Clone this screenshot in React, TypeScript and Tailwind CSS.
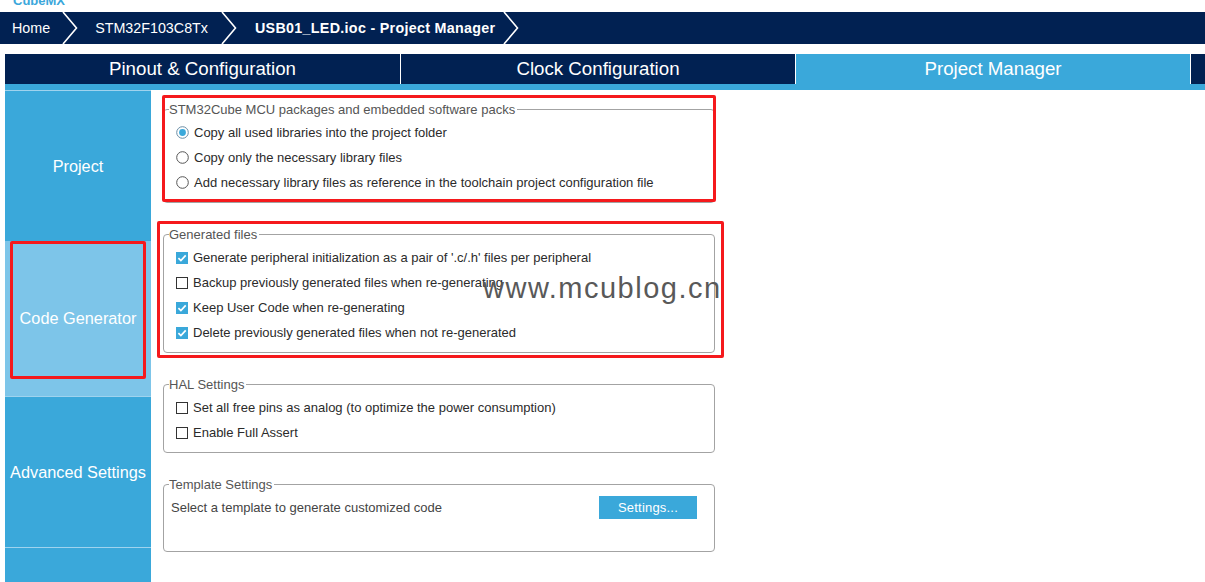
import React from "react";

const FONT = { fontFamily: '"Liberation Sans", Arial, sans-serif' };

function Chevron() {
  return (
    <svg width="16" height="32" viewBox="0 0 16 32" className="shrink-0">
      <polyline points="1,0 14.5,16 1,32" fill="none" stroke="#ffffff" strokeWidth="1.6" />
    </svg>
  );
}

function Radio({ checked }: { checked?: boolean }) {
  return (
    <svg width="13" height="13" viewBox="0 0 13 13" className="shrink-0">
      <circle cx="6.5" cy="6.5" r="5.8" fill="#ffffff" stroke={checked ? "#6a8ea6" : "#555555"} strokeWidth="1" />
      {checked && <circle cx="6.5" cy="6.5" r="3.4" fill="#3aa8da" />}
    </svg>
  );
}

function Check({ checked }: { checked?: boolean }) {
  return (
    <svg width="12" height="12" viewBox="0 0 12 12" className="shrink-0">
      {checked ? (
        <>
          <rect x="0" y="0" width="12" height="12" fill="#3aa8da" />
          <path d="M2.4 6.1 L4.9 8.6 L9.7 3.4" fill="none" stroke="#ffffff" strokeWidth="1.7" />
        </>
      ) : (
        <rect x="0.5" y="0.5" width="11" height="11" fill="#ffffff" stroke="#333333" strokeWidth="1" />
      )}
    </svg>
  );
}

function Row({ icon, label }: { icon: React.ReactNode; label: string }) {
  return (
    <div className="flex h-[25px] items-center gap-[5px]">
      {icon}
      <span className="text-[13px] leading-[15px] text-[#2b2b2b] whitespace-nowrap">{label}</span>
    </div>
  );
}

function Group({
  title,
  children,
  pb = "pb-[7px]",
  pl = "pl-[7px]",
}: {
  title: string;
  children: React.ReactNode;
  pb?: string;
  pl?: string;
}) {
  return (
    <fieldset className={`w-[552px] rounded-[4px] border border-[#a3a3a3] pl-[5px] ${pb}`}>
      <legend className="pr-[2px] text-[13px] leading-[15px] text-[#555555] whitespace-nowrap">{title}</legend>
      <div className={`pt-[3px] ${pl}`}>{children}</div>
    </fieldset>
  );
}

export default function App() {
  return (
    <div className="relative flex h-[582px] w-[1205px] flex-col overflow-hidden bg-white" style={FONT}>
      {/* clipped app title */}
      <div className="h-[12px] overflow-hidden pl-[13px]">
        <div className="-mt-[6px] text-[13px] font-bold leading-[13px] text-[#3ba7db]">CubeMX</div>
      </div>

      {/* breadcrumb */}
      <div className="flex h-[32px] items-center bg-[#012152] text-[14.3px] text-white">
        <span className="ml-[12px] leading-[16px]">Home</span>
        <span className="ml-[12px] flex"><Chevron /></span>
        <span className="ml-[17px] leading-[16px]">STM32F103C8Tx</span>
        <span className="ml-[13px] flex"><Chevron /></span>
        <span className="ml-[18px] font-bold leading-[16px] tracking-[0.3px]">USB01_LED.ioc - Project Manager</span>
        <span className="ml-[8px] flex"><Chevron /></span>
      </div>

      <div className="h-[10px]" />

      {/* main tabs */}
      <div className="ml-[5px] flex h-[30px] gap-px bg-white text-[18.7px] text-white">
        <div className="flex w-[395px] items-center justify-center bg-[#012152]">Pinout &amp; Configuration</div>
        <div className="flex w-[394px] items-center justify-center bg-[#012152]">Clock Configuration</div>
        <div className="flex w-[394px] items-center justify-center bg-[#3aa8da]">Project Manager</div>
        <div className="flex-1 bg-[#012152]" />
      </div>
      <div className="ml-[5px] h-[6px] bg-[#3aa8da]" />

      <div className="flex flex-1">
        {/* sidebar */}
        <div className="ml-[5px] flex w-[146px] flex-col bg-[#3aa8da] text-[16.3px] text-white">
          <div className="flex h-[151px] items-center justify-center border-t border-[#9fd3ee]">Project</div>
          <div className="relative flex h-[155px] items-center justify-center bg-[#7dc5e9]">
            Code Generator
            <div className="pointer-events-none absolute left-[5px] top-0 h-[138px] w-[136px] rounded-[2px] border-[3px] border-[#f5191c]" />
          </div>
          <div className="flex h-[151px] items-center justify-center border-t border-[#9fd3ee]">Advanced Settings</div>
          <div className="flex-1 border-t border-[#9fd3ee]" />
        </div>

        {/* content */}
        <div className="flex flex-col gap-[24px] pl-[12px] pt-[12px]">
          <div className="relative">
            <Group title="STM32Cube MCU packages and embedded software packs">
              <Row icon={<Radio checked />} label="Copy all used libraries into the project folder" />
              <Row icon={<Radio />} label="Copy only the necessary library files" />
              <Row icon={<Radio />} label="Add necessary library files as reference in the toolchain project configuration file" />
            </Group>
            <div className="pointer-events-none absolute -left-[1px] -top-[7px] h-[107px] w-[554px] rounded-[2px] border-[3px] border-[#f5191c]" />
          </div>

          <div className="relative">
            <Group title="Generated files">
              <Row icon={<Check checked />} label="Generate peripheral initialization as a pair of '.c/.h' files per peripheral" />
              <Row icon={<Check />} label="Backup previously generated files when re-generating" />
              <Row icon={<Check checked />} label="Keep User Code when re-generating" />
              <Row icon={<Check checked />} label="Delete previously generated files when not re-generated" />
            </Group>
            <div className="pointer-events-none absolute -left-[6px] -top-[6px] h-[137px] w-[567px] rounded-[2px] border-[3px] border-[#f5191c]" />
            <div className="pointer-events-none absolute left-[320px] top-[47px] whitespace-nowrap text-[29px] leading-[29px] tracking-[1.5px] text-[#595959]">
              www.mcublog.cn
            </div>
          </div>

          <Group title="HAL Settings">
            <Row icon={<Check />} label="Set all free pins as analog (to optimize the power consumption)" />
            <Row icon={<Check />} label="Enable Full Assert" />
          </Group>

          <Group title="Template Settings" pb="pb-[31px]" pl="pl-[2px]">
            <div className="flex h-[25px] items-center">
              <span className="text-[13px] leading-[15px] text-[#444444]">Select a template to generate customized code</span>
              <button className="ml-auto mr-[17px] flex h-[23px] w-[98px] items-center justify-center bg-[#3aa8da] text-[13px] leading-[15px] tracking-[0.2px] text-white">
                Settings...
              </button>
            </div>
          </Group>
        </div>
      </div>
    </div>
  );
}
